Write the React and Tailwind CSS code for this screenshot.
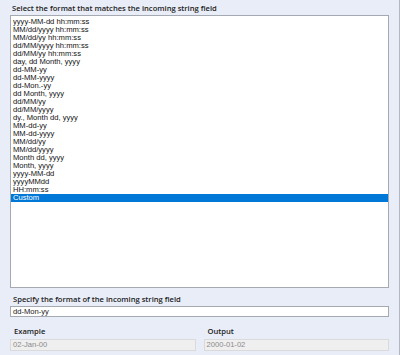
const FORMATS = [
  'yyyy-MM-dd hh:mm:ss',
  'MM/dd/yyyy hh:mm:ss',
  'MM/dd/yy hh:mm:ss',
  'dd/MM/yyyy hh:mm:ss',
  'dd/MM/yy hh:mm:ss',
  'day, dd Month, yyyy',
  'dd-MM-yy',
  'dd-MM-yyyy',
  'dd-Mon.-yy',
  'dd Month, yyyy',
  'dd/MM/yy',
  'dd/MM/yyyy',
  'dy., Month dd, yyyy',
  'MM-dd-yy',
  'MM-dd-yyyy',
  'MM/dd/yy',
  'MM/dd/yyyy',
  'Month dd, yyyy',
  'Month, yyyy',
  'yyyy-MM-dd',
  'yyyyMMdd',
  'HH:mm:ss',
  'Custom',
];

const App = () => {
  const selected = 'Custom';

  return (
    <div className="w-[400px] h-[355px] bg-[#e9edf7] border-r border-[#b3b7c0] font-['Liberation_Sans',sans-serif] text-[#1a1a1a] overflow-hidden">
      <div className="px-[10px] pt-[2px]">
        {/* Format list */}
        <div className="font-['Open_Sans',sans-serif] text-[7.6px] leading-[12px] font-semibold pl-[2px] text-[#222]">
          Select the format that matches the incoming string field
        </div>
        <div className="mt-[1px] h-[273px] bg-white border border-[#a5a9b2] pt-[2px]">
          {FORMATS.map((f) => (
            <div
              key={f}
              className={`h-[8px] leading-[8px] text-[7.6px] pl-[2px] ${
                f === selected ? 'bg-[#0078d7] text-white' : 'text-[#111]'
              }`}
            >
              {f}
            </div>
          ))}
        </div>

        {/* Custom format */}
        <div className="mt-[5px] font-['Open_Sans',sans-serif] text-[7.6px] leading-[12px] font-semibold pl-[3px] text-[#222]">
          Specify the format of the incoming string field
        </div>
        <div className="mt-[1px] h-[11px] bg-white border border-[#a5a9b2] text-[7.6px] leading-[9px] pl-[2px]">
          dd-Mon-yy
        </div>

        {/* Preview */}
        <div className="mt-[8px] grid grid-cols-2 gap-x-[8px]">
          <div>
            <div className="font-['Open_Sans',sans-serif] text-[7.6px] leading-[12px] font-semibold pl-[4px] text-[#222]">Example</div>
            <div className="mt-[2px] h-[12px] bg-[#efefef] border border-[#dadada] text-[7.6px] leading-[10px] pl-[2px] text-[#8a8a8a]">
              02-Jan-00
            </div>
          </div>
          <div>
            <div className="font-['Open_Sans',sans-serif] text-[7.6px] leading-[12px] font-semibold pl-[4px] text-[#222]">Output</div>
            <div className="mt-[2px] h-[12px] bg-[#efefef] border border-[#dadada] text-[7.6px] leading-[10px] pl-[2px] text-[#8a8a8a]">
              2000-01-02
            </div>
          </div>
        </div>
      </div>
    </div>
  );
};

export default App;
